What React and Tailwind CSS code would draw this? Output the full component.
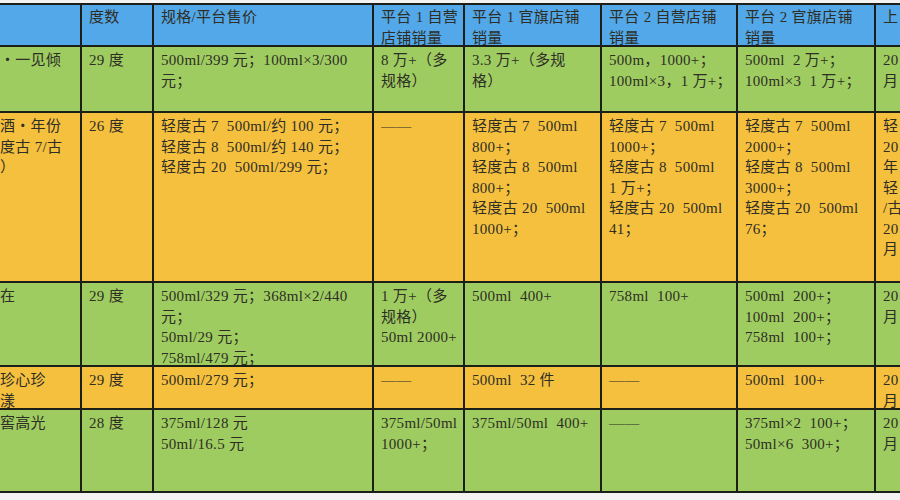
const cols = "grid-cols-[82px_72px_220px_91px_137px_136px_138px_80px]";

const header = [
    [],
    ["度数"],
    ["规格/平台售价"],
    ["平台 1 自营", "店铺销量"],
    ["平台 1 官旗店铺", "销量"],
    ["平台 2 自营店铺", "销量"],
    ["平台 2 官旗店铺", "销量"],
    ["上"],
];

const rows = [
    {
        tone: "green",
        cells: [
            ["・一见倾"],
            ["29 度"],
            ["500ml/399 元；100ml×3/300", "元；"],
            ["8 万+（多", "规格）"],
            ["3.3 万+（多规", "格）"],
            ["500m，1000+；", "100ml×3，1 万+；"],
            ["500ml  2 万+；", "100ml×3  1 万+；"],
            ["20", "月"],
        ],
    },
    {
        tone: "orange",
        cells: [
            ["酒・年份", "度古 7/古", "）"],
            ["26 度"],
            ["轻度古 7  500ml/约 100 元；", "轻度古 8  500ml/约 140 元；", "轻度古 20  500ml/299 元；"],
            ["——"],
            ["轻度古 7  500ml", "800+；", "轻度古 8  500ml", "800+；", "轻度古 20  500ml", "1000+；"],
            ["轻度古 7  500ml", "1000+；", "轻度古 8  500ml", "1 万+；", "轻度古 20  500ml", "41；"],
            ["轻度古 7  500ml", "2000+；", "轻度古 8  500ml", "3000+；", "轻度古 20  500ml", "76；"],
            ["轻", "20", "年", "轻", "/古", "20", "月"],
        ],
    },
    {
        tone: "green",
        cells: [
            ["在"],
            ["29 度"],
            ["500ml/329 元；368ml×2/440", "元；", "50ml/29 元；", "758ml/479 元；"],
            ["1 万+（多", "规格）", "50ml 2000+"],
            ["500ml  400+"],
            ["758ml  100+"],
            ["500ml  200+；", "100ml  200+；", "758ml  100+；"],
            ["20", "月"],
        ],
    },
    {
        tone: "orange",
        cells: [
            ["珍心珍", "漾"],
            ["29 度"],
            ["500ml/279 元；"],
            ["——"],
            ["500ml  32 件"],
            ["——"],
            ["500ml  100+"],
            ["20", "月"],
        ],
    },
    {
        tone: "green",
        cells: [
            ["窖高光"],
            ["28 度"],
            ["375ml/128 元", "50ml/16.5 元"],
            ["375ml/50ml", "1000+；"],
            ["375ml/50ml  400+"],
            ["——"],
            ["375ml×2  100+；", "50ml×6  300+；"],
            ["20", "月"],
        ],
    },
];

const toneClass = {
    green: "bg-[#9ecc60]",
    orange: "bg-[#f5c03e]",
    blue: "bg-[#52a8e8]",
};

function Cell({ lines, tone, first, header }) {
    return (
        <div
            className={`overflow-hidden border-r-2 border-b-2 border-[#1c1f18] ${toneClass[tone]} ${first ? "pl-0" : "pl-[7px]"} ${header ? "pt-[2px]" : "pt-[3px]"}`}
        >
            {lines.map((line, i) => (
                <div key={i} className="whitespace-pre leading-[20.5px]">
                    {line}
                </div>
            ))}
        </div>
    );
}

export default function App() {
    return (
        <div
            className="h-[500px] w-[900px] overflow-hidden bg-[#f3f3f1] pt-[3px] text-[15px] tracking-[0.3px] text-[#2e2e26]"
            style={{ fontFamily: '"Liberation Serif", "Noto Sans CJK SC", serif' }}
        >
            <div className={`grid w-[956px] border-t-2 border-[#1c1f18] ${cols} grid-rows-[42px_66px_170px_84px_43px_83px]`}>
                {header.map((lines, i) => (
                    <Cell key={`h-${i}`} lines={lines} tone="blue" first={i === 0} header />
                ))}
                {rows.map((row, r) =>
                    row.cells.map((lines, i) => (
                        <Cell key={`${r}-${i}`} lines={lines} tone={row.tone} first={i === 0} />
                    ))
                )}
            </div>
        </div>
    );
}
